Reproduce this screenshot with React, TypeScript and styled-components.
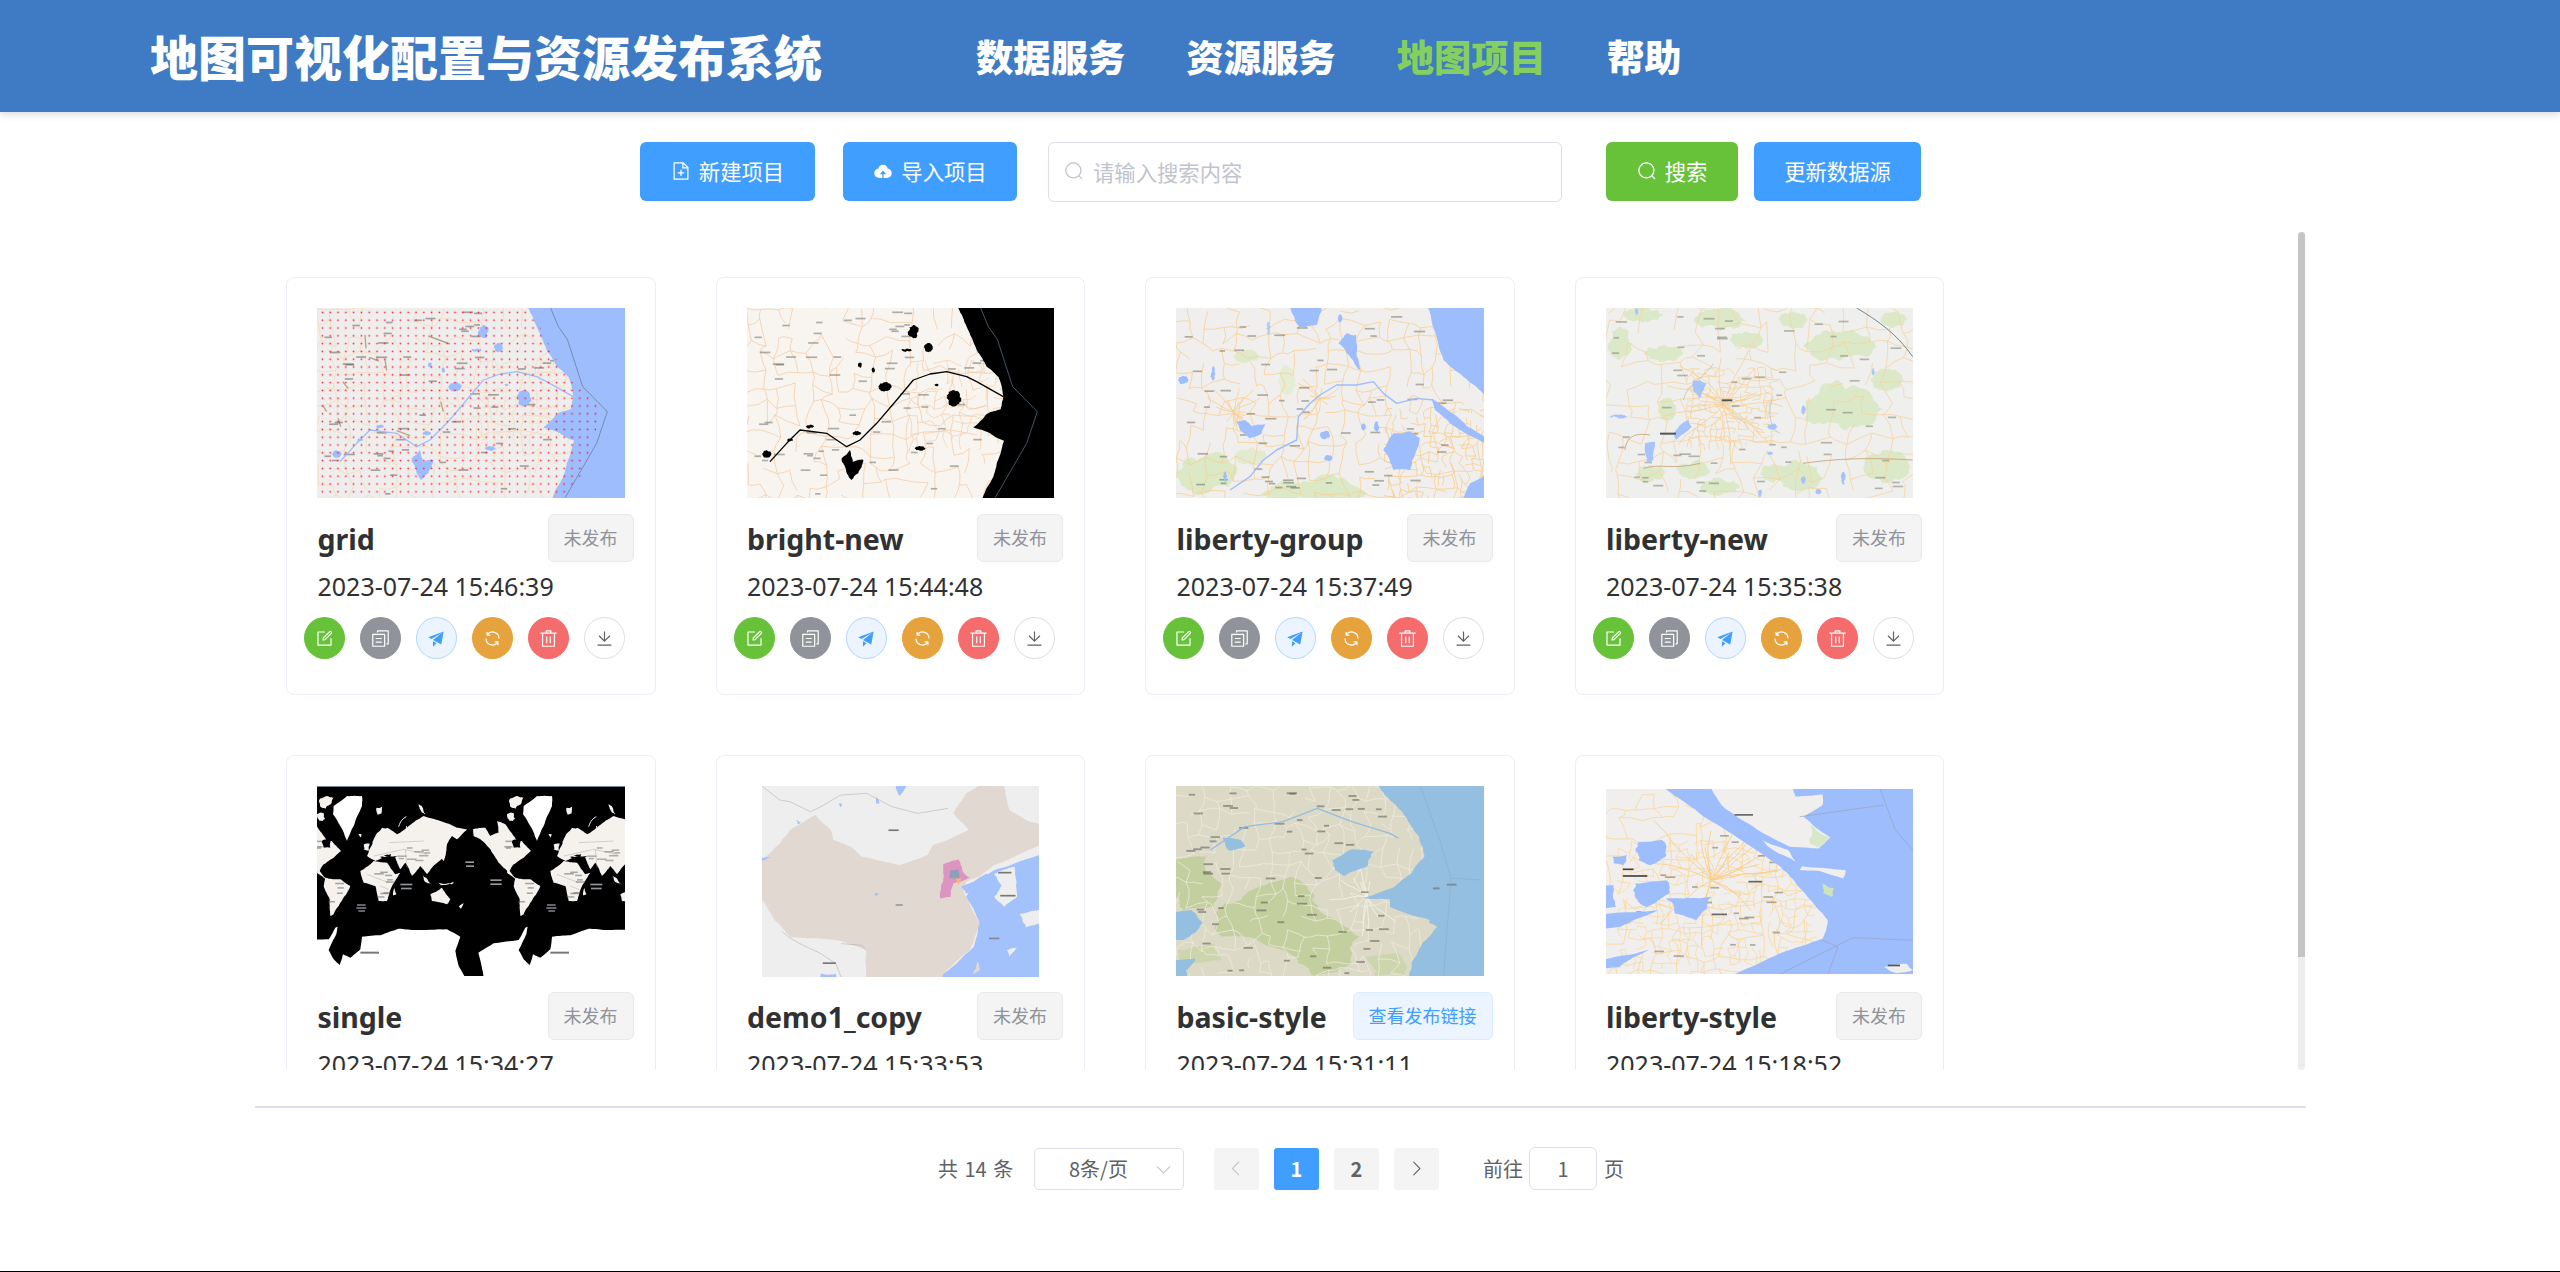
import React from 'react';
import styled, { createGlobalStyle } from 'styled-components';

const Global = createGlobalStyle`
  html, body { margin: 0; padding: 0; background: #fff; }
  body { font-family: "Noto Sans", "Noto Sans CJK SC", sans-serif; }
  * { box-sizing: border-box; }
`;

/* ---------- Element-style icons ---------- */
const P: Record<string, string> = {
  search: 'm795.904 750.72 124.992 124.928a32 32 0 0 1-45.248 45.248L750.656 795.904a416 416 0 1 1 45.248-45.248zM480 832a352 352 0 1 0 0-704 352 352 0 0 0 0 704z',
  edit: 'M832 512a32 32 0 1 1 64 0v352a32 32 0 0 1-32 32H160a32 32 0 0 1-32-32V160a32 32 0 0 1 32-32h352a32 32 0 0 1 0 64H192v640h640V512zM469.952 554.24l52.8-7.552L847.104 222.4a32 32 0 1 0-45.248-45.248L477.44 501.44l-7.552 52.8zm422.4-422.4a96 96 0 0 1 0 135.808l-331.84 331.84a32 32 0 0 1-18.112 9.088L436.8 623.68a32 32 0 0 1-36.224-36.224l15.104-105.6a32 32 0 0 1 9.024-18.112l331.904-331.84a96 96 0 0 1 135.744 0z',
  del: 'M160 256H96a32 32 0 0 1 0-64h256V95.936a32 32 0 0 1 32-32h256a32 32 0 0 1 32 32V192h256a32 32 0 1 1 0 64h-64v672a32 32 0 0 1-32 32H192a32 32 0 0 1-32-32V256zm448-64v-64H416v64h192zM224 896h576V256H224v640zm192-128a32 32 0 0 1-32-32V416a32 32 0 0 1 64 0v320a32 32 0 0 1-32 32zm192 0a32 32 0 0 1-32-32V416a32 32 0 0 1 64 0v320a32 32 0 0 1-32 32z',
  download: 'M160 832h704a32 32 0 1 1 0 64H160a32 32 0 1 1 0-64zm384-253.696 236.288-236.352 45.248 45.248L508.8 704 192 387.2l45.248-45.248L480 584.704V128h64v450.304z',
  refresh: 'M771.776 794.88A384 384 0 0 1 128 512h64a320 320 0 0 0 555.712 216.448H654.72a32 32 0 1 1 0-64h149.056a32 32 0 0 1 32 32v148.928a32 32 0 1 1-64 0v-50.56zM276.288 295.616h92.992a32 32 0 0 1 0 64H220.16a32 32 0 0 1-32-32V178.56a32 32 0 0 1 64 0v50.56A384 384 0 0 1 896.128 512h-64a320 320 0 0 0-555.776-216.384z',
  send: 'm64 448 832-320-128 704-446.08-243.328L832 192 242.816 545.472 64 448zm256 512V657.024L512 768 320 960z',
  copy: 'M128 320v576h576V320H128zm-32-64h640a32 32 0 0 1 32 32v640a32 32 0 0 1-32 32H96a32 32 0 0 1-32-32V288a32 32 0 0 1 32-32zM960 96v704a32 32 0 0 1-32 32h-96v-64h64V128H384v64h-64V96a32 32 0 0 1 32-32h576a32 32 0 0 1 32 32zM256 672h320v64H256v-64zm0-192h320v64H256v-64z',
  add: 'M832 384H576V128H192v768h640V384zm-26.496-64L640 154.496V320h165.504zM160 64h480l256 256v608a32 32 0 0 1-32 32H160a32 32 0 0 1-32-32V96a32 32 0 0 1 32-32zm320 512V448h64v128h128v64H544v128h-64V640H352v-64h128z',
  upload: 'M544 864V672h128L512 480 352 672h128v192H320v-2.56c-5.376.32-10.496.56-16 .56A240 240 0 0 1 64 624c0-123.136 92.672-224.576 212.064-238.272A239.872 239.872 0 0 1 512 192a239.872 239.872 0 0 1 235.936 193.728c119.392 13.696 211.968 115.136 211.968 238.272A240 240 0 0 1 720 864c-5.376 0-10.624-.24-16-.56V864H544z',
  left: 'M609.408 149.376 277.76 489.6a32 32 0 0 0 0 44.672l331.648 340.352a29.12 29.12 0 0 0 41.728 0 30.592 30.592 0 0 0 0-42.752L339.264 511.936l311.872-319.872a30.592 30.592 0 0 0 0-42.688 29.12 29.12 0 0 0-41.728 0z',
  right: 'M340.864 149.312a30.592 30.592 0 0 0 0 42.752L652.736 512 340.864 831.872a30.592 30.592 0 0 0 0 42.752 29.12 29.12 0 0 0 41.728 0L714.24 534.336a32 32 0 0 0 0-44.672L382.592 149.376a29.12 29.12 0 0 0-41.728 0z',
  down: 'M831.872 340.864 512 652.672 192.128 340.864a30.592 30.592 0 0 0-42.688 0 29.12 29.12 0 0 0 0 41.6L489.664 714.24a32 32 0 0 0 44.672 0l340.224-331.712a29.12 29.12 0 0 0 0-41.6 30.592 30.592 0 0 0-42.688 0z',
};
const Icon = ({ n, s }: { n: string; s: number }) => (
  <svg viewBox="0 0 1024 1024" width={s} height={s} fill="currentColor"><path d={P[n]} /></svg>
);

/* ---------- procedural map drawing ---------- */
const rng = (seed: number) => () => {
  seed = (seed + 0x6d2b79f5) | 0;
  let t = Math.imul(seed ^ (seed >>> 15), 1 | seed);
  t = (t + Math.imul(t ^ (t >>> 7), 61 | t)) ^ t;
  return ((t ^ (t >>> 14)) >>> 0) / 4294967296;
};
const hash = (s: string) => {
  let h = 7;
  for (let i = 0; i < s.length; i++) h = (Math.imul(h, 31) + s.charCodeAt(i)) | 0;
  return h;
};
const rough = (p: string, amp = 0.22, levels = 3) => {
  if (!amp) return p;
  const r = rng(hash(p));
  let pts = p.trim().split(/\s+/).map((q) => q.split(',').map(Number));
  for (let l = 0; l < levels; l++) {
    const out: number[][] = [];
    pts.forEach((a, i) => {
      const b = pts[(i + 1) % pts.length];
      const dx = b[0] - a[0];
      const dy = b[1] - a[1];
      const k = (r() - 0.5) * amp;
      out.push(a, [(a[0] + b[0]) / 2 - dy * k, (a[1] + b[1]) / 2 + dx * k]);
    });
    pts = out;
  }
  return pts.map((q) => `${q[0].toFixed(1)},${q[1].toFixed(1)}`).join(' ');
};
type Box = [number, number, number, number];
/* jittered grid of road segments */
const net = (seed: number, b: Box, cx: number, cy: number, keep: number) => {
  const r = rng(seed);
  const cols = Math.ceil((b[2] - b[0]) / cx) + 1;
  const rows = Math.ceil((b[3] - b[1]) / cy) + 1;
  const nodes: number[][][] = [];
  for (let i = 0; i <= cols; i++) {
    nodes[i] = [];
    for (let j = 0; j <= rows; j++) {
      nodes[i][j] = [b[0] + (i + (r() - 0.5) * 0.8) * cx, b[1] + (j + (r() - 0.5) * 0.8) * cy];
    }
  }
  let d = '';
  const seg = (a: number[], c: number[]) => {
    const mx = (a[0] + c[0]) / 2 + (r() - 0.5) * cx * 0.25;
    const my = (a[1] + c[1]) / 2 + (r() - 0.5) * cy * 0.25;
    d += `M${a[0].toFixed(0)} ${a[1].toFixed(0)}L${mx.toFixed(0)} ${my.toFixed(0)}L${c[0].toFixed(0)} ${c[1].toFixed(0)}`;
  };
  for (let i = 0; i < cols; i++) {
    for (let j = 0; j < rows; j++) {
      if (r() < keep) seg(nodes[i][j], nodes[i + 1][j]);
      if (r() < keep) seg(nodes[i][j], nodes[i][j + 1]);
    }
  }
  return d;
};
const radial = (seed: number, cx: number, cy: number, n: number, lx: number, ly = lx) => {
  const r = rng(seed);
  let d = '';
  for (let i = 0; i < n; i++) {
    let x = cx;
    let y = cy;
    let h = r() * Math.PI * 2;
    d += `M${x.toFixed(0)} ${y.toFixed(0)}`;
    const k = 2 + Math.floor(r() * 4);
    for (let j = 0; j < k; j++) {
      h += (r() - 0.5) * 0.5;
      x += Math.cos(h) * lx;
      y += Math.sin(h) * ly;
      d += `L${x.toFixed(0)} ${y.toFixed(0)}`;
    }
  }
  return d;
};
const Line = ({ d, c, w = 0.6, o = 1 }: { d: string; c: string; w?: number; o?: number }) => (
  <path d={d} fill="none" stroke={c} strokeWidth={w} opacity={o} vectorEffect="non-scaling-stroke" strokeLinejoin="round" />
);
const Poly = ({ p, c, o = 1, a = 0.2 }: { p: string; c: string; o?: number; a?: number }) => (
  <polygon points={rough(p, a)} fill={c} opacity={o} />
);
const Labels = ({ seed, b, n, c, sx = 1, sy = 1 }: { seed: number; b: Box; n: number; c: string; sx?: number; sy?: number }) => {
  const r = rng(seed);
  return (
    <>
      {Array.from({ length: n }, (_, i) => (
        <rect key={i} x={b[0] + r() * (b[2] - b[0])} y={b[1] + r() * (b[3] - b[1])} width={(16 + r() * 18) * sx} height={5 * sy} fill={c} opacity={0.5} />
      ))}
    </>
  );
};
const Blob = ({ x, y, rx, ry, c, o = 1 }: { x: number; y: number; rx: number; ry: number; c: string; o?: number }) => {
  const pts = Array.from({ length: 8 }, (_, i) => {
    const t = (i / 8) * Math.PI * 2;
    return `${(x + Math.cos(t) * rx).toFixed(1)},${(y + Math.sin(t) * ry).toFixed(1)}`;
  }).join(' ');
  return <Poly p={pts} c={c} o={o} a={0.45} />;
};

const DELTA_SEA = '745,50 745,114 770,170 800,240 830,290 866,322 880,380 872,418 830,432 790,472 840,490 882,512 868,560 850,620 818,684 818,760 1120,760 1120,50';
const DELTA_LAND_DOTS = '111,114 745,114 770,150 830,270 880,340 960,410 960,440 910,610 840,684 111,684';
const Delta = ({ land, sea, road, border, labels, dots, id }: { land: string; sea: string; road: string; border: string; labels: string; dots?: boolean; id: string }) => (
  <>
    <rect x="60" y="100" width="1040" height="600" fill={land} />
    <Line d={net(11, [111, 114, 870, 684], 48, 48, 0.62)} c={road} w={0.7} />
    <Line d={net(12, [600, 280, 860, 500], 26, 26, 0.5)} c={road} w={0.6} />
    {dots && <Line d="M255 195L258 235M268 262L296 273M445 198L510 222M188 335L205 356M315 268L320 302M482 395L490 425M128 405L140 425M175 445L182 470M350 482L390 497" c="#b8a58d" w={1.4} />}
    <Labels seed={5} b={[120, 120, 820, 670]} n={64} c={labels} />
    <Line d="M180 575L230 520L270 480L350 490L410 530L450 510L500 460L560 390L610 330L660 312L710 305L770 320L800 335L880 380" c={sea} w={1.3} />
    <Poly c={sea} p={DELTA_SEA} a={0.1} />
    <Blob x={610} y={185} rx={16} ry={20} c={sea} />
    <Blob x={655} y={233} rx={13} ry={14} c={sea} />
    <Blob x={525} y={350} rx={20} ry={13} c={sea} />
    <Blob x={732} y={385} rx={22} ry={24} c={sea} />
    <Poly c={sea} p="395,565 420,540 428,575 460,570 445,610 425,630 405,590" />
    <Blob x={170} y={552} rx={14} ry={11} c={sea} />
    <Blob x={630} y={535} rx={16} ry={7} c={sea} />
    <Blob x={300} y={470} rx={12} ry={5} c={sea} />
    <Blob x={440} y={490} rx={14} ry={6} c={sea} />
    <Blob x={240} y={510} rx={9} ry={4} c={sea} />
    <Blob x={680} y={345} rx={6} ry={4} c={sea} />
    <Blob x={450} y={285} rx={6} ry={8} c={sea} />
    <Blob x={490} y={300} rx={5} ry={8} c={sea} />
    <Blob x={590} y={240} rx={16} ry={4} c={sea} />
    <Line d="M812 114L835 170L862 208L908 350L982 425L950 520L855 684" c={border} w={0.8} />
    {dots && (
      <>
        <defs>
          <pattern id={id} patternUnits="userSpaceOnUse" width="23.4" height="23.4">
            <rect x="8" y="8" width="4.5" height="4.5" fill="#f0143c" />
          </pattern>
        </defs>
        <polygon fill={`url(#${id})`} points={DELTA_LAND_DOTS} />
      </>
    )}
  </>
);

const LibertyGroup = () => {
  const sea = '#9dbdfd';
  const land = '#f0efed';
  return (
    <>
      <rect x="130" y="110" width="940" height="580" fill={land} />
      <Blob x={230} y={610} rx={90} ry={60} c="#dbe9c6" />
      <Blob x={550} y={670} rx={160} ry={36} c="#dbe9c6" />
      <Blob x={350} y={260} rx={40} ry={20} c="#dfeacb" />
      <Blob x={470} y={330} rx={26} ry={46} c="#e5edd4" />
      <Blob x={360} y={560} rx={50} ry={26} c="#e2ebd0" />
      <Line d={net(21, [138, 114, 1062, 684], 46, 46, 0.68)} c="#f7cf93" w={0.8} />
      <Line d={net(22, [770, 420, 1062, 684], 22, 22, 0.55)} c="#f7cd8c" w={0.8} />
      <Line d={radial(23, 310, 425, 18, 18)} c="#f7cf93" w={0.8} />
      <Line d={radial(25, 570, 385, 12, 16)} c="#f7cf93" w={0.8} />
      <Labels seed={24} b={[145, 120, 1020, 670]} n={66} c="#66665c" />
      <Poly c={sea} p="895,60 895,114 920,200 940,270 1000,320 1062,372 1120,372 1120,60" a={0.08} />
      <Poly c={sea} p="1000,684 1020,640 1062,618 1120,618 1120,740 1000,740" a={0.08} />
      <Line d="M300 660L360 620L400 570L440 540L500 510L505 440L540 400L570 375L620 345L680 345L730 335L760 370L800 400L860 385L910 390" c={sea} w={1.4} />
      <Poly c={sea} p="905,385 960,425 1070,505 1070,525 960,460 915,420" a={0.08} />
      <Poly c={land} p="975,420 1070,445 1070,490" a={0.08} />
      <Poly c={sea} p="475,80 580,80 560,165 510,175" />
      <Poly c={sea} p="625,220 650,190 678,195 680,260 690,300 650,250" />
      <Poly c={sea} p="320,455 345,450 365,468 405,462 395,490 360,505 330,480" a={0.14} />
      <Poly c={sea} p="760,540 790,490 840,485 870,505 860,540 840,600 790,600" a={0.16} />
      <Blob x={585} y={495} rx={16} ry={13} c={sea} />
      <Blob x={595} y={565} rx={13} ry={9} c={sea} />
      <Blob x={740} y={470} rx={7} ry={16} c={sea} />
      <Blob x={700} y={470} rx={7} ry={11} c={sea} />
      <Blob x={250} y={310} rx={6} ry={22} c={sea} />
      <Blob x={160} y={330} rx={16} ry={12} c={sea} />
      <Blob x={285} y={620} rx={6} ry={16} c={sea} />
      <Blob x={415} y={175} rx={6} ry={20} c={sea} o={0.7} />
      <Blob x={630} y={145} rx={7} ry={12} c={sea} />
    </>
  );
};

const LibertyNew = () => {
  const sea = '#a6c4fb';
  return (
    <>
      <rect x="130" y="110" width="940" height="580" fill="#efefee" />
      {[[250,135,60,22],[480,150,80,32],[310,250,60,26],[840,230,110,44],[320,420,28,36],[850,420,120,60],[980,590,70,50],[720,620,70,44],[560,210,50,26],[820,360,40,26],[700,150,44,26],[180,220,36,50],[480,650,60,26],[980,330,50,34],[270,610,44,26],[640,610,40,30],[1000,150,40,24],[400,600,50,26]].map((a, i) => (
        <Blob key={i} x={a[0]} y={a[1]} rx={a[2]} ry={a[3]} c="#dbe9c8" />
      ))}
      <Line d={net(31, [138, 114, 1058, 684], 56, 56, 0.62)} c="#f7d39e" w={0.8} />
      <Line d={net(35, [380, 300, 620, 510], 18, 18, 0.6)} c="#f8cf92" w={0.7} />
      <Line d={radial(32, 490, 405, 22, 36)} c="#f7cf93" w={0.8} />
      <Line d="M195 540C200 490 240 490 270 495M250 595C300 580 340 600 420 580M730 580C800 570 900 560 1058 570" c="#c8a67a" w={0.9} />
      <Line d="M890 114C950 150 1010 190 1058 260" c="#6a7a8a" w={0.9} />
      <Line d="M460 280C440 320 380 340 370 390M640 380C620 420 630 480 660 490" c="#aaa9b4" w={0.5} />
      <Labels seed={34} b={[145, 125, 1020, 670]} n={60} c="#77776a" />
      <Poly c={sea} p="255,520 285,515 280,570 260,580" />
      <Poly c={sea} p="340,490 385,450 395,470 350,510" />
      <Poly c={sea} p="400,330 440,340 420,385 400,365" />
      <Blob x={637} y={470} rx={15} ry={9} c={sea} />
      <Blob x={730} y={630} rx={8} ry={11} c={sea} />
      <Blob x={850} y={625} rx={6} ry={20} c={sea} />
      <Blob x={230} y={125} rx={5} ry={10} c={sea} />
      <Blob x={175} y={440} rx={28} ry={5} c={sea} />
      <Blob x={940} y={305} rx={4} ry={12} c={sea} />
      <Blob x={775} y={665} rx={9} ry={8} c={sea} />
      <Blob x={600} y={670} rx={5} ry={12} c={sea} />
      <Blob x={630} y={550} rx={9} ry={5} c={sea} />
      <Blob x={730} y={420} rx={6} ry={14} c={sea} />
      <rect x="300" y="488" width="48" height="6" fill="#555" />
      <rect x="485" y="388" width="32" height="6" fill="#555" />
    </>
  );
};

const W = '#f5f2ed';
const Continents = ({ dx }: { dx: number }) => (
  <g transform={`translate(${dx} 0)`}>
    <Poly c="#fff" a={0.08} p="50,60 90,30 135,30 135,60 110,120 90,165 70,120 48,85" />
    <Poly c={W} a={0.3} p="6,42 30,30 50,35 42,55 25,68 10,62" />
    <Poly c={W} a={0.3} p="0,85 20,80 24,100 8,105" />
    <Poly c={W} a={0.2} p="178,66 196,62 194,82 182,86" />
    <Poly c={W} a={0.2} p="305,55 314,60 325,85 315,80" />
    <Poly c={W} a={0.2} p="124,145 134,145 130,155" />
    {/* North America */}
    <Poly c={W} a={0.1} p="-102,130 -65,125 -50,150 -25,140 -30,105 -5,115 20,150 30,165 45,165 72,195 50,215 20,235 5,260 -25,230 -50,190 -80,160 -100,150" />
    <Poly c="#000" a={0.2} p="15,165 40,160 40,185 20,185" />
    <Poly c={W} a={0.15} p="0,245 30,280 20,275 0,260" />
    {/* South America */}
    <Poly c={W} a={0.1} p="25,275 70,280 100,300 70,350 50,385 40,390 38,340 20,300" />
    {/* Eurasia */}
    <Poly c={W} a={0.08} p="150,210 170,165 210,125 240,145 275,120 320,90 370,105 420,125 450,130 420,160 405,150 390,175 385,210 355,235 330,265 310,240 285,270 265,230 250,250 235,215 200,215 175,225" />
    <Poly c={W} a={0.15} p="165,170 195,125 215,130 190,170" />
    <Poly c={W} a={0.15} p="140,175 158,172 155,195 142,192" />
    <Poly c={W} a={0.15} p="370,215 385,195 380,225" />
    <Poly c="#000" a={0.15} p="190,212 240,210 225,222 195,218" />
    <Poly c="#000" a={0.15} p="200,208 222,205 220,213" />
    {/* Africa */}
    <Poly c={W} a={0.08} p="130,255 170,225 210,230 235,265 250,260 225,300 210,345 185,345 175,300 140,290" />
    <Poly c={W} a={0.15} p="232,305 238,325 228,328" />
    {/* Australia and islands */}
    <Poly c={W} a={0.1} p="340,325 375,305 400,340 390,355 345,345" />
    <Poly c={W} a={0.2} p="365,290 410,288 405,295 372,298" />
    <Poly c={W} a={0.2} p="315,265 345,295 322,285" />
    <Poly c={W} a={0.2} p="425,362 440,350 432,368" />
    <path d="M245 122C250 105 258 97 268 92M268 120L272 135" stroke={W} strokeWidth="3" fill="none" />
    <Line d="M170 210L260 190L330 205M215 170L320 165M265 190L270 245M150 265L215 290M190 300L215 310" c="#9a9a9a" w={0.4} />
    <Labels seed={41} b={[160, 235, 215, 335]} n={8} c="#555" sy={0.9} />
    <Labels seed={42} b={[240, 180, 350, 240]} n={9} c="#666" sx={0.9} sy={0.9} />
    <Labels seed={46} b={[30, 290, 70, 350]} n={4} c="#555" sx={0.9} sy={0.9} />
    <Labels seed={47} b={[-30, 160, 10, 200]} n={3} c="#555" sx={0.9} sy={0.9} />
    <rect x="250" y="293" width="36" height="5" fill="#cfd6dd" opacity="0.7" />
    <rect x="252" y="305" width="32" height="5" fill="#cfd6dd" opacity="0.7" />
    <rect x="120" y="355" width="26" height="4" fill="#cfd6dd" opacity="0.7" />
    <rect x="118" y="364" width="30" height="4" fill="#cfd6dd" opacity="0.7" />
    <rect x="124" y="373" width="20" height="4" fill="#cfd6dd" opacity="0.7" />
    <rect x="130" y="497" width="56" height="6" fill="#777" />
  </g>
);
const World = () => (
  <>
    <rect x="-10" y="-10" width="944" height="590" fill="#000" />
    <rect x="0" y="0" width="924" height="3" fill="#6f8294" />
    <Poly c="#fff" a={0.04} p="-40,462 35,460 55,425 62,422 58,445 35,492 50,520 68,537 78,505 100,515 130,490 135,452 190,448 245,428 290,432 390,430 430,452 415,495 425,540 445,575 445,660 -40,660" />
    <Poly c="#fff" a={0.04} p="500,660 500,575 484,500 530,472 605,462 625,425 632,422 628,445 605,492 620,520 638,537 648,505 670,515 700,490 705,452 760,448 815,428 860,432 960,430 960,660" />
    <Continents dx={0} />
    <Continents dx={570} />
    <rect x="445" y="226" width="26" height="5" fill="#cfd6dd" opacity="0.7" />
    <rect x="447" y="238" width="24" height="5" fill="#cfd6dd" opacity="0.7" />
    <rect x="520" y="280" width="34" height="5" fill="#cfd6dd" opacity="0.7" />
    <rect x="520" y="292" width="34" height="5" fill="#cfd6dd" opacity="0.7" />
  </>
);

const China = () => {
  const sea = '#a3c1fb';
  const land = '#eeeeee';
  return (
    <>
      <rect x="940" y="100" width="560" height="590" fill={land} />
      <Poly c={sea} a={0.08} p="1540,315 1488,315 1440,340 1400,360 1360,395 1345,440 1370,510 1360,590 1290,680 1290,740 1540,740" />
      <Poly c="#e2d8d2" a={0.06} p="1050,195 1080,240 1085,270 1120,290 1140,320 1215,345 1270,315 1280,285 1350,240 1320,190 1345,130 1395,80 1415,80 1430,180 1470,215 1510,225 1510,270 1440,320 1400,345 1370,380 1345,395 1340,425 1355,470 1372,520 1352,600 1300,670 1290,740 1150,740 1150,600 1100,572 1000,560 970,510 945,450 920,450 920,330 945,330 980,280 1000,240" />
      <Poly c={sea} p="1335,410 1360,395 1385,370 1395,395 1370,415 1345,430" a={0.15} />
      <Poly c={land} p="1400,372 1440,350 1445,440 1420,470 1400,440 1415,405" a={0.15} />
      <Poly c={land} p="1450,492 1510,468 1510,510 1462,532" />
      <Poly c={land} p="1425,600 1445,590 1430,620" />
      <Poly c="#e2d8d2" p="1365,630 1372,660 1358,672" />
      <Poly c="#de94c0" a={0.15} p="1300,342 1330,328 1340,368 1352,382 1320,400 1315,440 1295,445 1298,400" />
      <Poly c="#8f9fb8" a={0.15} p="1315,360 1330,358 1332,385 1312,385" />
      <Poly c="#f4b96e" a={0.1} p="1325,385 1336,385 1330,405" />
      <Poly c={sea} p="1205,90 1240,90 1215,138" />
      <Poly c={sea} p="1170,130 1176,160 1168,160" />
      <Poly c={sea} p="1096,160 1102,160 1100,172" />
      <Poly c={sea} p="1012,208 1022,218 1015,222" />
      <Poly c={sea} p="930,325 965,322 930,335" />
      <Poly c={sea} p="1060,670 1090,670 1090,700 1060,700" />
      <Poly c={sea} p="1165,428 1175,430 1168,438" />
      <Line d="M945 108L980 150L1000 155L1040 185L1060 170L1100 135L1150 130L1200 170L1250 190L1310 175M985 545C1010 580 1050 600 1060 610M1060 610L1090 640L1100 680M1150 600L1140 585L1100 580" c="#a8a8a8" w={0.5} />
      <rect x="1193" y="238" width="20" height="5" fill="#777" />
      <rect x="1207" y="462" width="14" height="5" fill="#999" />
      <rect x="1408" y="365" width="26" height="5" fill="#777" />
      <rect x="1412" y="434" width="30" height="5" fill="#777" />
      <rect x="1064" y="636" width="26" height="5" fill="#777" />
      <rect x="1390" y="562" width="20" height="5" fill="#889" />
    </>
  );
};

const Basic = () => {
  const sea = '#94bfe0';
  const land = '#dcd9c6';
  return (
    <>
      <rect x="55" y="100" width="420" height="590" fill={land} />
      <Poly c="#c4cf9f" a={0.3} p="60,330 100,320 120,400 110,470 70,480 60,440" />
      <Poly c="#c4cf9f" a={0.3} p="120,470 160,420 210,380 240,430 260,500 300,560 290,640 240,678 200,600 150,560 120,560" />
      <Poly c="#ccd5ac" a={0.3} p="310,620 350,610 360,678 320,678" />
      <Poly c="#ccd5ac" a={0.3} p="62,600 110,580 120,630 70,640" />
      <Line d={net(51, [60, 108, 380, 678], 18, 40, 0.65)} c="#f0eee4" w={0.7} />
      <Line d={radial(54, 310, 440, 12, 10, 24)} c="#f6f5ee" w={0.8} />
      <Labels seed={52} b={[70, 125, 350, 670]} n={64} c="#4f4f45" sx={0.4} sy={1.1} />
      <Poly c={sea} a={0.08} p="325,50 325,108 345,160 362,205 378,260 385,320 368,370 345,412 305,445 340,448 340,470 378,502 402,530 382,580 370,630 365,678 365,740 520,740 520,50" />
      <Line d="M105 300L150 230L200 215L245 175L290 215L340 250L370 290" c={sea} w={1.4} />
      <Poly c={sea} a={0.18} p="265,330 290,298 320,305 310,350 280,378 268,360" />
      <Poly c={sea} p="122,262 145,270 150,290 130,302" />
      <Poly c={sea} p="40,495 80,480 95,520 70,570 40,560" />
      <Poly c={sea} p="40,640 85,625 75,700 40,700" />
      <Poly c={land} p="376,500 392,510 384,545 372,530" />
      <Poly c={land} a={0.12} p="335,260 375,270 380,300 345,290" />
      <Labels seed={53} b={[395, 400, 415, 415]} n={2} c="#555" sx={0.5} sy={1.1} />
      <Line d="M380 108L405 270L420 385L460 390M420 385L410 678" c="#84a8c9" w={0.5} />
    </>
  );
};

const Shanghai = () => {
  const sea = '#9dbdfd';
  const land = '#f0efee';
  return (
    <>
      <rect x="615" y="110" width="415" height="570" fill={land} />
      <Line d={net(61, [622, 117, 900, 671], 22, 50, 0.7)} c="#fbd596" w={0.8} />
      <Line d={net(63, [640, 280, 880, 620], 11, 24, 0.55)} c="#fbd596" w={0.7} />
      <Line d={radial(62, 760, 390, 20, 22, 50)} c="#f9cf8c" w={0.9} />
      <Labels seed={64} b={[635, 250, 880, 660]} n={28} c="#6a6250" sx={0.4} sy={1} />
      <Poly c={sea} a={0.05} p="700,60 1100,60 1100,740 790,740 790,671 850,608 905,565 912,510 882,430 850,350 800,272 750,200 700,117" />
      <Poly c={land} a={0.06} p="760,60 905,60 905,165 880,200 915,262 900,295 862,290 808,220 775,170 760,117" />
      <Poly c="#d6e8c8" p="890,225 915,262 900,292 888,280" />
      <Poly c={sea} a={0.08} p="860,60 950,60 950,125 870,140" />
      <Poly c={land} a={0.08} p="878,348 935,360 932,385 900,362 875,360" />
      <Poly c="#cfe2b8" p="905,400 920,415 917,440 906,430" />
      <Poly c={land} a={0.1} p="825,270 860,300 870,335 840,300" />
      <Line d="M875 200L985 165M980 117L1000 240L1023 300M850 670L945 562L1023 570M905 570L925 590L912 670" c="#9aa0ae" w={0.6} />
      <Poly c={sea} p="665,275 695,270 700,320 680,345 665,330" />
      <Poly c={sea} p="600,410 632,405 635,470 600,480" a={0.1} />
      <Poly c={sea} p="660,400 700,390 705,430 675,470 660,440" />
      <Poly c={sea} p="700,445 760,440 740,510 712,490" />
      <Poly c={sea} p="600,495 665,485 690,480 640,530 600,540" a={0.1} />
      <Poly c={sea} p="600,640 660,610 680,595 640,650 600,660" a={0.1} />
      <Poly c={sea} p="630,320 650,315 645,345 632,340" />
      <Poly c={land} p="985,650 1015,640 1023,660 1000,668" />
      <rect x="644" y="355" width="14" height="5" fill="#444" />
      <rect x="644" y="375" width="32" height="5" fill="#444" />
      <rect x="790" y="192" width="24" height="5" fill="#666" />
      <rect x="760" y="490" width="20" height="5" fill="#666" />
      <rect x="808" y="392" width="18" height="5" fill="#666" />
      <rect x="990" y="643" width="16" height="5" fill="#555" />
    </>
  );
};

const maps: Record<string, { w: number; h: number; vb: string; art: React.ReactNode }> = {
  grid: { w: 308, h: 190, vb: '111 114 924 570', art: <Delta id="dots" land="#efeeec" sea="#9dbdfd" road="#f6d9b2" border="#6f7f9a" labels="#555" dots /> },
  bright: { w: 307, h: 190, vb: '111 114 921 570', art: <Delta id="nodots" land="#f8f4ef" sea="#000000" road="#f4c9a0" border="#56697a" labels="#666" /> },
  group: { w: 308, h: 190, vb: '138 114 924 570', art: <LibertyGroup /> },
  berlin: { w: 307, h: 190, vb: '138 114 921 570', art: <LibertyNew /> },
  world: { w: 308, h: 190, vb: '0 0 924 570', art: <World /> },
  china: { w: 277, h: 191, vb: '945 108 543 572', art: <China /> },
  basic: { w: 308, h: 190, vb: '60 108 403 570', art: <Basic /> },
  shanghai: { w: 307, h: 185, vb: '622 117 401 554', art: <Shanghai /> },
};

/* ---------- page ---------- */
const Page = styled.div`
  width: 2560px;
  height: 1272px;
  overflow: hidden;
  background: #fff;
  border-bottom: 1px solid #000;
  display: flex;
  flex-direction: column;
`;
const Header = styled.header`
  flex: none;
  height: 112px;
  padding-left: 150px;
  background: #3e7bc4;
  box-shadow: 0 2px 8px rgba(0, 0, 0, 0.16);
  display: flex;
  align-items: center;
  color: #fff;
  font-family: "Noto Sans CJK SC", sans-serif;
  font-weight: 900;
`;
const Title = styled.div`
  font-size: 48px;
  line-height: 64px;
  width: 826px;
  padding-bottom: 3px;
`;
const Nav = styled.nav`
  display: flex;
  gap: 61px;
`;
const NavItem = styled.a<{ $active?: boolean }>`
  font-size: 37.33px;
  line-height: 50px;
  color: ${(p) => (p.$active ? '#85cf60' : '#fff')};
`;
const Toolbar = styled.div`
  flex: none;
  height: 118px;
  padding: 30px 0 0 640px;
  display: flex;
  align-items: flex-start;
`;
const Btn = styled.button<{ $bg: string; $w: number; $mr: number }>`
  width: ${(p) => p.$w}px;
  height: 59px;
  margin-right: ${(p) => p.$mr}px;
  padding: 0 0 2px;
  border: 0;
  border-radius: 6px;
  background: ${(p) => p.$bg};
  color: #fff;
  font: 400 21.33px "Noto Sans CJK SC", sans-serif;
  display: flex;
  align-items: center;
  justify-content: center;
  gap: 8px;
`;
const SearchBox = styled.div`
  width: 514px;
  height: 60px;
  margin-right: 44px;
  border: 1px solid #dcdfe6;
  border-radius: 6px;
  padding: 0 0 2px 15px;
  display: flex;
  align-items: center;
  gap: 9px;
  color: #c0c4cc;
  font: 400 21.33px "Noto Sans CJK SC", sans-serif;
`;
const ScrollFrame = styled.div`
  position: relative;
  flex: none;
  width: 2051px;
  height: 840px;
  margin-left: 255px;
`;
const Scroller = styled.main`
  height: 100%;
  overflow: hidden;
  padding: 47px 0 0 31px;
`;
const ScrollTrack = styled.div`
  position: absolute;
  top: 2px;
  right: 1px;
  bottom: 0;
  width: 7px;
  border-radius: 4px;
  background: #ededed;
`;
const ScrollThumb = styled.div`
  height: 725px;
  border-radius: 4px 4px 0 0;
  background: #c4c4c4;
`;
const Grid = styled.div`
  display: grid;
  grid-template-columns: repeat(4, 369.5px);
  column-gap: 60px;
  row-gap: 60px;
  padding-bottom: 28px;
`;
const Card = styled.article`
  height: 418px;
  border: 1px solid #ebeef5;
  border-radius: 8px;
  padding-top: 30px;
  color: #303133;
`;
const Thumb = styled.div`
  height: 190px;
  display: flex;
  align-items: center;
  justify-content: center;
`;
const MapSvg = styled.svg<{ $w: number; $h: number }>`
  display: block;
  width: ${(p) => p.$w}px;
  height: ${(p) => p.$h}px;
`;
const MetaRow = styled.div`
  margin-top: 16px;
  padding: 0 21px 0 30.5px;
  display: flex;
  justify-content: space-between;
  align-items: flex-start;
`;
const Name = styled.div`
  font-size: 28.5px;
  font-weight: 700;
  line-height: 48px;
  padding-top: 1px;
  white-space: nowrap;
`;
const Tag = styled.span<{ $on?: boolean }>`
  flex: none;
  height: 48px;
  padding: 0 15px;
  border: 1px solid ${(p) => (p.$on ? '#d9ecff' : '#e9e9eb')};
  border-radius: 6px;
  background: ${(p) => (p.$on ? '#ecf5ff' : '#f4f4f5')};
  color: ${(p) => (p.$on ? '#409eff' : '#909399')};
  font: 400 18px/44px "Noto Sans CJK SC", sans-serif;
`;
const DateText = styled.div`
  margin-top: 6px;
  padding-left: 30.5px;
  font-size: 25px;
  line-height: 34px;
  white-space: nowrap;
`;
const Actions = styled.div`
  margin-top: 14px;
  padding-left: 17px;
  display: flex;
  gap: 15px;
`;
const Round = styled.button<{ $bg: string; $fg: string; $bd: string }>`
  width: 41px;
  height: 42px;
  padding: 0;
  border: 1px solid ${(p) => p.$bd};
  border-radius: 50%;
  background: ${(p) => p.$bg};
  color: ${(p) => p.$fg};
  display: flex;
  align-items: center;
  justify-content: center;
`;
const Divider = styled.div`
  flex: none;
  width: 2051px;
  height: 2px;
  margin: 36px 0 0 255px;
  background: #dcdfe6;
`;
const Pager = styled.div`
  flex: none;
  margin-top: 39px;
  padding-left: 938px;
  display: flex;
  align-items: center;
  height: 43px;
  color: #606266;
  font: 400 20px "Noto Sans CJK SC", sans-serif;
`;
const PagerText = styled.span<{ $w?: number; $ml?: number; $mr?: number }>`
  width: ${(p) => (p.$w ? `${p.$w}px` : 'auto')};
  margin: 0 ${(p) => p.$mr ?? 0}px 0 ${(p) => p.$ml ?? 0}px;
  white-space: nowrap;
  word-spacing: 2px;
`;
const SizeSelect = styled.div`
  position: relative;
  width: 150px;
  height: 42px;
  margin-right: 30px;
  border: 1px solid #dcdfe6;
  border-radius: 5px;
  display: flex;
  align-items: center;
  padding-left: 34px;
`;
const Chevron = styled.span`
  position: absolute;
  right: 10px;
  top: 11px;
  color: #c0c4cc;
  line-height: 0;
`;
const PageBtn = styled.div<{ $active?: boolean; $dim?: boolean }>`
  width: 45px;
  height: 42px;
  margin-right: 15px;
  border-radius: 3px;
  background: ${(p) => (p.$active ? '#409eff' : '#f4f4f5')};
  color: ${(p) => (p.$active ? '#fff' : p.$dim ? '#c0c4cc' : '#606266')};
  display: flex;
  align-items: center;
  justify-content: center;
  font-weight: 700;
`;
const Jump = styled.div`
  width: 68px;
  height: 43px;
  margin-right: 7px;
  border: 1px solid #dcdfe6;
  border-radius: 6px;
  display: flex;
  align-items: center;
  justify-content: center;
`;

type Item = { name: string; time: string; map: string; on?: boolean };
const items: Item[] = [
  { name: 'grid', time: '2023-07-24 15:46:39', map: 'grid' },
  { name: 'bright-new', time: '2023-07-24 15:44:48', map: 'bright' },
  { name: 'liberty-group', time: '2023-07-24 15:37:49', map: 'group' },
  { name: 'liberty-new', time: '2023-07-24 15:35:38', map: 'berlin' },
  { name: 'single', time: '2023-07-24 15:34:27', map: 'world' },
  { name: 'demo1_copy', time: '2023-07-24 15:33:53', map: 'china' },
  { name: 'basic-style', time: '2023-07-24 15:31:11', map: 'basic', on: true },
  { name: 'liberty-style', time: '2023-07-24 15:18:52', map: 'shanghai' },
];
const actions = [
  { n: 'edit', bg: '#67c23a', fg: '#fff', bd: '#67c23a' },
  { n: 'copy', bg: '#909399', fg: '#fff', bd: '#909399' },
  { n: 'send', bg: '#ecf5ff', fg: '#409eff', bd: '#b3d8ff' },
  { n: 'refresh', bg: '#e6a23c', fg: '#fff', bd: '#e6a23c' },
  { n: 'del', bg: '#f56c6c', fg: '#fff', bd: '#f56c6c' },
  { n: 'download', bg: '#fff', fg: '#606266', bd: '#dcdfe6' },
];

export default function App() {
  return (
    <Page>
      <Global />
      <Header>
        <Title>地图可视化配置与资源发布系统</Title>
        <Nav>
          <NavItem>数据服务</NavItem>
          <NavItem>资源服务</NavItem>
          <NavItem $active>地图项目</NavItem>
          <NavItem>帮助</NavItem>
        </Nav>
      </Header>
      <Toolbar>
        <Btn $bg="#409eff" $w={175} $mr={28}><Icon n="add" s={20} />新建项目</Btn>
        <Btn $bg="#409eff" $w={174} $mr={31}><Icon n="upload" s={20} />导入项目</Btn>
        <SearchBox><Icon n="search" s={20} />请输入搜索内容</SearchBox>
        <Btn $bg="#67c23a" $w={132} $mr={16}><Icon n="search" s={20} />搜索</Btn>
        <Btn $bg="#409eff" $w={167} $mr={0}>更新数据源</Btn>
      </Toolbar>
      <ScrollFrame>
        <Scroller>
          <Grid>
            {items.map((it) => {
              const m = maps[it.map];
              return (
                <Card key={it.name}>
                  <Thumb>
                    <MapSvg $w={m.w} $h={m.h} viewBox={m.vb} preserveAspectRatio="none">{m.art}</MapSvg>
                  </Thumb>
                  <MetaRow>
                    <Name>{it.name}</Name>
                    <Tag $on={it.on}>{it.on ? '查看发布链接' : '未发布'}</Tag>
                  </MetaRow>
                  <DateText>{it.time}</DateText>
                  <Actions>
                    {actions.map((a) => (
                      <Round key={a.n} $bg={a.bg} $fg={a.fg} $bd={a.bd}><Icon n={a.n} s={19} /></Round>
                    ))}
                  </Actions>
                </Card>
              );
            })}
          </Grid>
        </Scroller>
        <ScrollTrack><ScrollThumb /></ScrollTrack>
      </ScrollFrame>
      <Divider />
      <Pager>
        <PagerText $w={96}>共 14 条</PagerText>
        <SizeSelect>8条/页<Chevron><Icon n="down" s={19} /></Chevron></SizeSelect>
        <PageBtn $dim><Icon n="left" s={19} /></PageBtn>
        <PageBtn $active>1</PageBtn>
        <PageBtn>2</PageBtn>
        <PageBtn><Icon n="right" s={19} /></PageBtn>
        <PagerText $ml={29} $mr={6}>前往</PagerText>
        <Jump>1</Jump>
        <PagerText>页</PagerText>
      </Pager>
    </Page>
  );
}
